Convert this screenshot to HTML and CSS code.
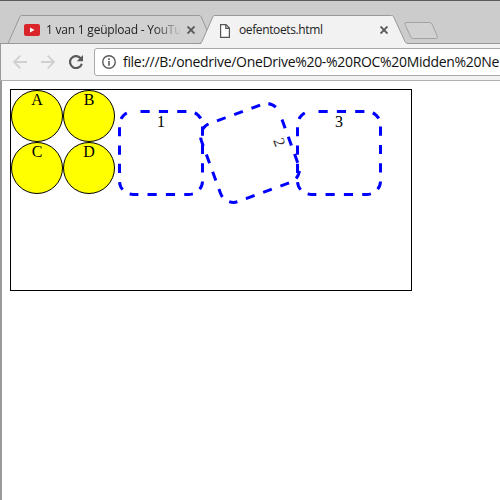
FILE: index.html
```
<!DOCTYPE html>
<html lang="nl">
<head>
<meta charset="utf-8">
<title>oefentoets.html</title>
<link rel="stylesheet" href="styles.css">
</head>
<body>
<div class="window">
  <header class="tabstrip">
    <svg class="tab-shapes" width="500" height="44" viewBox="0 0 500 44">
      <path d="M0 43.5H8L20 16.5Q20.500 15.500 22 15.500H199Q200.500 15.500 201 16.500L213 43.500Z" fill="#d1d1d1" stroke="#999"/>
      <path d="M201 44L213 16.500Q213.500 15.500 215 15.500H391.500Q393 15.500 393.500 16.500L405 41.500Q406 43.500 408 43.500V44Z" fill="#f2f2f2"/>
      <path d="M0 43.500H199Q201 43.500 202 41.500L213 16.500Q213.500 15.500 215 15.500H391.500Q393 15.500 393.500 16.500L405 41.500Q406 43.500 408 43.500H500" fill="none" stroke="#999"/>
      <path d="M406 22.500H429.500Q431.300 22.500 432 24L437 35.500Q438 38.500 436.500 38.500H413.500Q411.500 38.500 410.800 37L405 24.500Q404.300 22.500 406 22.500Z" fill="#d1d1d1" stroke="#a2a2a2"/>
    </svg>
    <div class="tab tab-back">
      <svg class="favicon" width="16" height="12" viewBox="0 0 16 12"><rect width="16" height="12" rx="2" fill="#d9252a"/><path d="M6 3.500V8.500L10.500 6Z" fill="#fff"/></svg>
      <span class="title title-back">1 van 1 geüpload - YouTu</span>
      <svg class="close" width="8" height="8" viewBox="0 0 8 8"><path d="M.5.5L7.500 7.500M7.500.5L.5 7.500"/></svg>
    </div>
    <div class="tab tab-front">
      <svg class="page-icon" width="10" height="14" viewBox="0 0 10 14"><path d="M.6.6H6L9.400 4V13.400H.6ZM5.800.6V4.300H9.400" fill="#fff" stroke="#555" stroke-width="1.200"/></svg>
      <span class="title title-front">oefentoets.html</span>
      <svg class="close" width="8" height="8" viewBox="0 0 8 8"><path d="M.5.5L7.500 7.500M7.500.5L.5 7.500"/></svg>
    </div>
  </header>
  <nav class="toolbar">
    <svg class="nav-icon" width="14" height="14" viewBox="0 0 14 14"><path d="M14 7H1M7.300.7L1 7L7.300 13.300" fill="none" stroke="#d0d0d0" stroke-width="1.800"/></svg>
    <svg class="nav-icon" width="14" height="14" viewBox="0 0 14 14"><path d="M0 7H13M6.700.7L13 7L6.700 13.300" fill="none" stroke="#d0d0d0" stroke-width="1.800"/></svg>
    <svg class="nav-icon" width="14" height="14" viewBox="0 0 14 14"><path d="M11.600 3.200A6 6 0 1 0 12.800 8.700" fill="none" stroke="#5a5a5a" stroke-width="2.200"/><path d="M14 0V6.200H7.800Z" fill="#5a5a5a"/></svg>
    <div class="address">
      <svg class="info" width="14" height="14" viewBox="0 0 14 14"><circle cx="7" cy="7" r="6.250" fill="none" stroke="#5a5a5a" stroke-width="1.400"/><path d="M6.200 3.300H7.800V4.900H6.200ZM6.200 6.100H7.800V10.700H6.200Z" fill="#5a5a5a"/></svg>
      <span class="url">file:///B:/onedrive/OneDrive%20-%20ROC%20Midden%20Ne</span>
    </div>
  </nav>
  <main class="page">
    <section class="container">
      <div class="circles">
        <div class="circle">A</div>
        <div class="circle">B</div>
        <div class="circle">C</div>
        <div class="circle">D</div>
      </div>
      <div class="squares">
        <div class="square"><svg class="dashes" viewBox="0 0 86 86"><path id="dash-path" d="M22.500 0H71A15 15 0 0 1 86 15V71A15 15 0 0 1 71 86H15A15 15 0 0 1 0 71V15A15 15 0 0 1 15 0"/></svg>1</div>
        <div class="square turned"><svg class="dashes" viewBox="0 0 86 86"><use href="#dash-path"/></svg>2</div>
        <div class="square"><svg class="dashes" viewBox="0 0 86 86"><use href="#dash-path"/></svg>3</div>
      </div>
    </section>
  </main>
</div>
</body>
</html>
```
FILE: styles.css
```
* { box-sizing: border-box; }
body { margin: 0; overflow: hidden; background: #fff; }
.window { width: 500px; height: 500px; overflow: hidden; }
.tabstrip {
  position: relative;
  display: flex;
  height: 44px;
  padding-top: 16px;
  background: #ccc;
  border-top: 1px solid #5b595b;
  font: 12px/27px "Open Sans", "Noto Sans", sans-serif;
  color: #222;
}
.tab-shapes { position: absolute; left: 0; top: -1px; }
.tab { position: relative; display: flex; align-items: center; height: 27px; }
.tab-back { width: 197px; padding-left: 24px; }
.tab-front { width: 194px; padding-left: 23px; }
.favicon { margin-bottom: 1px; }
.title { white-space: nowrap; }
.title-back {
  width: 134px;
  margin: -2px 7px 0 6px;
  letter-spacing: -.22px;
  -webkit-mask-image: linear-gradient(to right, #000 108px, transparent 136px);
  mask-image: linear-gradient(to right, #000 108px, transparent 136px);
}
.title-front { width: 133px; margin: -2px 8px 0 9px; letter-spacing: -.38px; }
.close { margin-bottom: 1px; fill: none; stroke: #5a5a5a; stroke-width: 1.9; }
.toolbar {
  display: flex;
  align-items: center;
  height: 37px;
  padding-left: 12px;
  background: #f2f2f2;
  border-left: 1px solid #999;
  border-bottom: 1px solid #b0b0b0;
}
.nav-icon { flex: none; margin-right: 14px; }
.nav-icon + .nav-icon + .nav-icon { margin-right: 11px; }
.address {
  display: flex;
  flex: none;
  align-items: center;
  width: 420px;
  height: 28px;
  padding-left: 7px;
  background: #fff;
  border: 1px solid #a9a9a9;
  border-radius: 3px;
}
.info { flex: none; }
.url {
  margin-left: 7px;
  font: 14px/20px "Open Sans", "Noto Sans", sans-serif;
  letter-spacing: -.31px;
  white-space: nowrap;
  color: #111;
}
.page {
  height: 419px;
  padding: 8px 0 0 8px;
  border-left: 2px solid #999;
  font: 16px/18px "Liberation Serif", serif;
  color: #000;
}
.container { display: flex; width: 402px; height: 202px; border: 1px solid #000; }
.circles { display: grid; grid-template-columns: 52px 52px; grid-auto-rows: 52px; }
.circle { border: 1px solid #000; border-radius: 50%; background: #ff0; text-align: center; }
.squares { display: flex; gap: 3px; margin: 20px 0 0 3px; }
.square { position: relative; width: 86px; height: 86px; padding: 3px; text-align: center; }
.turned { color: #333; transform: rotate(70deg); }
.dashes {
  position: absolute;
  inset: 0;
  width: 86px;
  height: 86px;
  border-radius: 15px;
  overflow: hidden;
  fill: none;
  stroke: #00f;
  stroke-width: 6;
  stroke-dasharray: 9.2 9.16;
}
```
